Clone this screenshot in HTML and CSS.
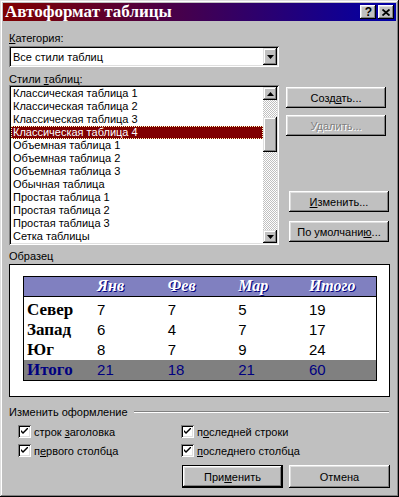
FILE: index.html
```html
<!DOCTYPE html>
<html lang="ru">
<head>
  <meta charset="UTF-8" />
  <meta name="viewport" content="width=device-width, initial-scale=1.0" />
  <title>Автоформат таблицы</title>
  <link rel="stylesheet" href="styles.css">
</head>
<body>
  <div class="window">
    <div class="titlebar">
      <span class="title">Автоформат таблицы</span>
      <div class="title-buttons">
        <span class="tbtn help">?</span>
        <span class="tbtn">
          <svg width="8" height="7" viewBox="0 0 8 7"><path d="M0.5 0.5 L7.5 6.5 M7.5 0.5 L0.5 6.5" stroke="#000" stroke-width="1.8" /></svg>
        </span>
      </div>
    </div>

    <div class="content">
      <div class="label label-cat"><u>К</u>атегория:</div>
      <div class="combo">
        <span class="combo-text">Все стили таблиц</span>
        <span class="arrow-btn">
          <svg width="7" height="4" viewBox="0 0 7 4"><polygon points="0,0 7,0 3.5,4" fill="#000" /></svg>
        </span>
      </div>

      <div class="label label-styles">Стили <u>т</u>аблиц:</div>
      <div class="styles-row">
        <div class="listbox">
          <ul class="items">
            <li>Классическая таблица 1</li>
            <li>Классическая таблица 2</li>
            <li>Классическая таблица 3</li>
            <li class="selected">Классическая таблица 4</li>
            <li>Объемная таблица 1</li>
            <li>Объемная таблица 2</li>
            <li>Объемная таблица 3</li>
            <li>Обычная таблица</li>
            <li>Простая таблица 1</li>
            <li>Простая таблица 2</li>
            <li>Простая таблица 3</li>
            <li>Сетка таблицы</li>
          </ul>
          <div class="scrollbar">
            <span class="arrow-btn sb">
              <svg width="7" height="4" viewBox="0 0 7 4"><polygon points="0,4 7,4 3.5,0" fill="#000" /></svg>
            </span>
            <div class="track"><span class="thumb"></span></div>
            <span class="arrow-btn sb">
              <svg width="7" height="4" viewBox="0 0 7 4"><polygon points="0,0 7,0 3.5,4" fill="#000" /></svg>
            </span>
          </div>
        </div>
        <div class="side">
          <button class="btn">Созд<u>а</u>ть...</button>
          <button class="btn disabled">Удалить...</button>
          <button class="btn shifted btn-edit"><u>И</u>зменить...</button>
          <button class="btn shifted btn-default">По умолчани<u>ю</u>...</button>
        </div>
      </div>

      <div class="label label-sample">Образец</div>
      <div class="preview">
        <table class="sample">
          <thead>
            <tr><th></th><th>Янв</th><th>Фев</th><th>Мар</th><th>Итого</th></tr>
          </thead>
          <tbody>
            <tr class="first"><td class="name">Север</td><td>7</td><td>7</td><td>5</td><td>19</td></tr>
            <tr><td class="name">Запад</td><td>6</td><td>4</td><td>7</td><td>17</td></tr>
            <tr><td class="name">Юг</td><td>8</td><td>7</td><td>9</td><td>24</td></tr>
            <tr class="total"><td class="name">Итого</td><td>21</td><td>18</td><td>21</td><td>60</td></tr>
          </tbody>
        </table>
      </div>

      <div class="group-head">
        <span>Изменить оформление</span>
        <span class="rule"></span>
      </div>
      <div class="checks">
        <label class="check"><span class="box"><svg width="7" height="7" viewBox="0 0 7 7"><path d="M0 2 L0 4 L2 6 L7 1 L7 -1 L2 4 Z" fill="#000" /></svg></span><span>строк <u>з</u>аголовка</span></label>
        <label class="check"><span class="box"><svg width="7" height="7" viewBox="0 0 7 7"><path d="M0 2 L0 4 L2 6 L7 1 L7 -1 L2 4 Z" fill="#000" /></svg></span><span>п<u>о</u>следней строки</span></label>
        <label class="check"><span class="box"><svg width="7" height="7" viewBox="0 0 7 7"><path d="M0 2 L0 4 L2 6 L7 1 L7 -1 L2 4 Z" fill="#000" /></svg></span><span>п<u>е</u>рвого столбца</span></label>
        <label class="check"><span class="box"><svg width="7" height="7" viewBox="0 0 7 7"><path d="M0 2 L0 4 L2 6 L7 1 L7 -1 L2 4 Z" fill="#000" /></svg></span><span><u>п</u>оследнего столбца</span></label>
      </div>

      <div class="actions">
        <button class="btn btn-ok">При<u>м</u>енить</button>
        <button class="btn btn-cancel">Отмена</button>
      </div>
    </div>
  </div>
</body>
</html>
```

FILE: styles.css
```css
* {
  box-sizing: border-box;
}
body {
  margin: 0;
  background: #c0c0c0;
  font-family: "Liberation Sans", Arial, sans-serif;
  font-size: 11px;
  color: #000;
}
u {
  text-decoration: underline;
  text-underline-offset: 1px;
}
.window {
  width: 399px;
  height: 497px;
  padding: 3px;
  background: #c0c0c0;
  box-shadow: inset -1px -1px #000, inset 1px 1px #dfdfdf, inset -2px -2px #808080, inset 2px 2px #fff;
}
.titlebar {
  height: 18px;
  display: flex;
  align-items: center;
  justify-content: space-between;
  padding: 0 2px 0 2px;
  background: linear-gradient(to right, #800000, #0000a8);
}
.title {
  color: #fff;
  font: bold 17px "Liberation Serif", serif;
  line-height: 18px;
}
.title-buttons {
  display: flex;
  gap: 2px;
}
.tbtn {
  width: 16px;
  height: 14px;
  display: flex;
  align-items: center;
  justify-content: center;
  background: #c0c0c0;
  box-shadow: inset -1px -1px #000, inset 1px 1px #fff, inset -2px -2px #808080, inset 2px 2px #dfdfdf;
}
.help {
  font: bold 12px "Liberation Sans", sans-serif;
  padding-left: 1px;
}

.content {
  padding: 0 6px;
}
.label {
  line-height: 12px;
  white-space: nowrap;
}
.label-cat { margin-top: 11px; }
.label-styles { margin-top: 6px; }
.label-sample { margin-top: 5px; }

.combo {
  margin-top: 2px;
  width: 270px;
  height: 21px;
  padding: 2px;
  display: flex;
  align-items: center;
  background: #fff;
  box-shadow: inset 1px 1px #808080, inset -1px -1px #fff, inset 2px 2px #000, inset -2px -2px #dfdfdf;
}
.combo-text {
  flex: 1;
  padding-left: 2px;
}
.arrow-btn {
  width: 14px;
  height: 17px;
  display: flex;
  align-items: center;
  justify-content: center;
  background: #c0c0c0;
  box-shadow: inset -1px -1px #000, inset 1px 1px #dfdfdf, inset -2px -2px #808080, inset 2px 2px #fff;
}
.arrow-btn.sb {
  height: 13px;
}

.styles-row {
  display: flex;
  height: 160px;
}
.listbox {
  width: 270px;
  height: 160px;
  padding: 2px;
  display: flex;
  background: #fff;
  box-shadow: inset 1px 1px #808080, inset -1px -1px #fff, inset 2px 2px #000, inset -2px -2px #dfdfdf;
}
.items {
  flex: 1;
  margin: 0;
  padding: 0;
  list-style: none;
  overflow: hidden;
}
.items li {
  height: 13px;
  line-height: 13px;
  padding-left: 2px;
  white-space: nowrap;
}
.items li.selected {
  background: #800000;
  color: #fff;
  outline: 1px dotted #ffffc0;
  outline-offset: -1px;
}
.scrollbar {
  width: 14px;
  display: flex;
  flex-direction: column;
}
.track {
  flex: 1;
  background: repeating-conic-gradient(#c0c0c0 0 25%, #fff 0 50%) 0 0 / 2px 2px;
}
.thumb {
  display: block;
  height: 35px;
  margin-top: 17px;
  background: #c0c0c0;
  box-shadow: inset -1px -1px #000, inset 1px 1px #dfdfdf, inset -2px -2px #808080, inset 2px 2px #fff;
}

.side {
  margin-left: 7px;
  width: 104px;
  display: flex;
  flex-direction: column;
}
.btn {
  font: inherit;
  color: #000;
  width: 100px;
  height: 21px;
  padding: 0;
  border: none;
  background: #c0c0c0;
  box-shadow: inset -1px -1px #000, inset 1px 1px #fff, inset -2px -2px #808080, inset 2px 2px #dfdfdf;
}
.side .btn { margin-top: 7px; }
.side .btn:first-child { margin-top: 2px; }
.side .btn-edit { margin-top: 55px; }
.side .btn-default { margin-top: 9px; }
.btn.shifted { margin-left: 3px; }
.btn.disabled {
  color: #808080;
  text-shadow: 1px 1px 0 #fff;
}

.preview {
  margin-top: 2px;
  width: 381px;
  height: 133px;
  border: 1px solid #000;
  background: #fff;
  padding: 11px 0 0 13px;
}
.sample {
  width: 354px;
  table-layout: fixed;
  border-collapse: collapse;
  border: 1px solid #000;
}
.sample th,
.sample td {
  padding: 0 0 0 3px;
  text-align: left;
  vertical-align: baseline;
  white-space: nowrap;
}
.sample th {
  height: 20px;
  line-height: 18px;
  color: #fff;
  font: italic bold 16px "Liberation Serif", serif;
  text-shadow: 1px 1px 0 #000080;
  background: repeating-conic-gradient(#000080 0 25%, #fff 0 50%) 0 0 / 2px 2px;
  border-bottom: 1px solid #000;
}
.sample td {
  height: 18px;
  line-height: 18px;
  font: 15px "Liberation Sans", sans-serif;
}
.sample tr.first td {
  height: 21px;
  padding-top: 3px;
}
.sample td.name {
  font: bold 17px "Liberation Serif", serif;
}
.sample tr.total td {
  background: #808080;
  color: #000080;
}

.group-head {
  margin-top: 9px;
  display: flex;
  align-items: center;
  line-height: 12px;
}
.rule {
  flex: 1;
  margin-left: 6px;
  margin-right: 1px;
  border-top: 1px solid #808080;
  border-bottom: 1px solid #fff;
}
.checks {
  margin-top: 7px;
  padding-left: 9px;
  display: grid;
  grid-template-columns: 163px auto;
  row-gap: 6px;
}
.check {
  display: flex;
  align-items: center;
  gap: 3px;
  height: 13px;
  white-space: nowrap;
}
.box {
  width: 13px;
  height: 13px;
  display: flex;
  align-items: center;
  justify-content: center;
  background: #fff;
  box-shadow: inset 1px 1px #808080, inset -1px -1px #fff, inset 2px 2px #000, inset -2px -2px #dfdfdf;
}
.actions {
  margin-top: 8px;
  display: flex;
  justify-content: flex-end;
  gap: 6px;
}
.actions .btn {
  width: 101px;
  height: 23px;
}
.btn-ok {
  border: 1px solid #000;
}
```
